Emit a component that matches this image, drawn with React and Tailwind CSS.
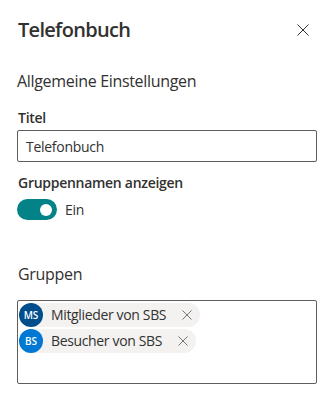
const font = { fontFamily: '"Segoe UI", "Open Sans", "Noto Sans", sans-serif' };

function Cross({ size, stroke = 1 }) {
  return (
    <svg width={size} height={size} viewBox="0 0 12 12" fill="none" stroke="currentColor" strokeWidth={stroke}>
      <path d="M0.5 0.5 L11.5 11.5 M11.5 0.5 L0.5 11.5" />
    </svg>
  );
}

function Chip({ initials, color, label }) {
  return (
    <div className="flex h-6 items-center rounded-full bg-[#f3f2f1] pr-[8px]">
      <div
        className={`flex h-6 w-6 items-center justify-center rounded-full text-[10px] font-semibold text-white ${color}`}
      >
        {initials}
      </div>
      <span className="ml-[8px] text-[14px] leading-6 tracking-[-0.025em] text-[#323130]">{label}</span>
      <span className="ml-[16px] flex h-[10px] w-[10px] items-center justify-center text-[#605e5c]">
        <Cross size={10} />
      </span>
    </div>
  );
}

export default function App() {
  return (
    <div className="h-[404px] w-[336px] bg-white pl-[17px] pr-[19px] text-[#323130]" style={font}>
      <div className="flex items-center justify-between pt-[16px]">
        <h1 className="pl-px text-[20px] font-semibold leading-[28px] tracking-[-0.035em]">Telefonbuch</h1>
        <button type="button" className="mr-[2px] flex h-6 w-6 items-center justify-center text-[#323130]">
          <Cross size={12} />
        </button>
      </div>
      <h2 className="mt-[26px] text-[16px] font-normal leading-[22px] tracking-[-0.02em]">
        Allgemeine Einstellungen
      </h2>
      <label className="mt-[16px] block pl-px text-[14px] font-semibold leading-5 tracking-[-0.02em]">Titel</label>
      <div className="mt-[2px] flex h-8 items-center rounded-[2px] border border-[#605e5c] px-[8px] text-[14px] tracking-[-0.02em]">
        Telefonbuch
      </div>
      <div className="mt-[11px] pl-px text-[14px] font-semibold leading-5 tracking-[-0.02em]">Gruppennamen anzeigen</div>
      <div className="mt-[6px] flex items-center">
        <div className="flex h-[21px] w-10 items-center justify-end rounded-full bg-[#038387] pr-[5px]">
          <div className="h-3 w-3 rounded-full bg-white" />
        </div>
        <span className="ml-[8px] text-[14px] leading-5 tracking-[-0.02em]">Ein</span>
      </div>
      <div className="mt-[43px] pl-px text-[16px] leading-[22px] tracking-[-0.02em]">Gruppen</div>
      <div className="mt-[15px] flex h-[84px] flex-col items-start gap-[2px] rounded-[2px] border border-[#605e5c] pl-px pt-[2px]">
        <Chip initials="MS" color="bg-[#004e8c]" label="Mitglieder von SBS" />
        <Chip initials="BS" color="bg-[#0078d4]" label="Besucher von SBS" />
      </div>
    </div>
  );
}
